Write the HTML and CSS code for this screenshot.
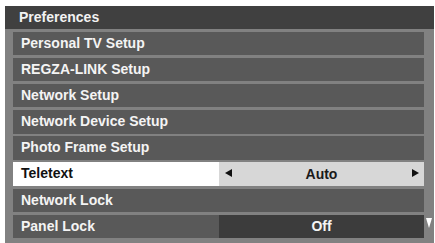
FILE: index.html
```html
<!DOCTYPE html>
<html lang="en">
<head>
    <meta charset="UTF-8">
    <title>Preferences</title>
    <link rel="stylesheet" href="styles.css">
</head>
<body>
    <div class="menu">
        <div class="menu-title">Preferences</div>
        <div class="menu-body">
            <div class="menu-rows">
                <div class="row"><span class="label">Personal TV Setup</span></div>
                <div class="row"><span class="label">REGZA-LINK Setup</span></div>
                <div class="row"><span class="label">Network Setup</span></div>
                <div class="row"><span class="label">Network Device Setup</span></div>
                <div class="row"><span class="label">Photo Frame Setup</span></div>
                <div class="row selected">
                    <span class="label">Teletext</span>
                    <span class="value">
                        <span class="arrow left"></span>
                        <span class="value-text">Auto</span>
                        <span class="arrow right"></span>
                    </span>
                </div>
                <div class="row"><span class="label">Network Lock</span></div>
                <div class="row">
                    <span class="label">Panel Lock</span>
                    <span class="value dark"><span class="value-text">Off</span></span>
                </div>
            </div>
            <div class="scroll">
                <span class="down"></span>
            </div>
        </div>
    </div>
</body>
</html>
```

FILE: styles.css
```css
body {
    margin: 0;
    background: #fff;
    font-family: "Liberation Sans", Arial, sans-serif;
    font-weight: bold;
}
.menu {
    margin: 6px 1px 0 5px;
    height: 237px;
    display: flex;
    flex-direction: column;
}
.menu-title {
    height: 23px;
    background-color: #404040;
    color: #f2f2f2;
    font-size: 14px;
    line-height: 23px;
    padding-left: 14px;
}
.menu-body {
    flex: 1;
    background-color: #818181;
    display: flex;
    padding: 3px 0 5px 8px;
}
.menu-rows {
    flex: 1;
    display: grid;
    grid-template-rows: repeat(8, 23.3px);
    row-gap: 2.8px;
}
.row {
    display: flex;
    background-color: #595959;
    color: #f4f4f4;
    font-size: 14px;
    line-height: 23px;
}
.label {
    width: 198px;
    padding-left: 8px;
}
.value {
    flex: 1;
    display: flex;
    align-items: center;
    justify-content: center;
    position: relative;
}
.value.dark {
    background-color: #3c3c3c;
}
.selected .label {
    background-color: #fff;
    color: #111;
}
.selected .value {
    background-color: #d7d7d7;
    color: #1a1a1a;
}
.arrow {
    position: absolute;
    top: 7px;
    width: 0;
    height: 0;
    border-top: 4.5px solid transparent;
    border-bottom: 4.5px solid transparent;
}
.arrow.left {
    left: 6px;
    border-right: 7px solid #111;
}
.arrow.right {
    right: 5px;
    border-left: 7px solid #111;
}
.scroll {
    width: 10px;
    display: flex;
    flex-direction: column;
    justify-content: flex-end;
    align-items: center;
}
.down {
    width: 0;
    height: 0;
    margin-bottom: 10px;
    border-left: 3px solid transparent;
    border-right: 3px solid transparent;
    border-top: 10px solid #fff;
}
```
